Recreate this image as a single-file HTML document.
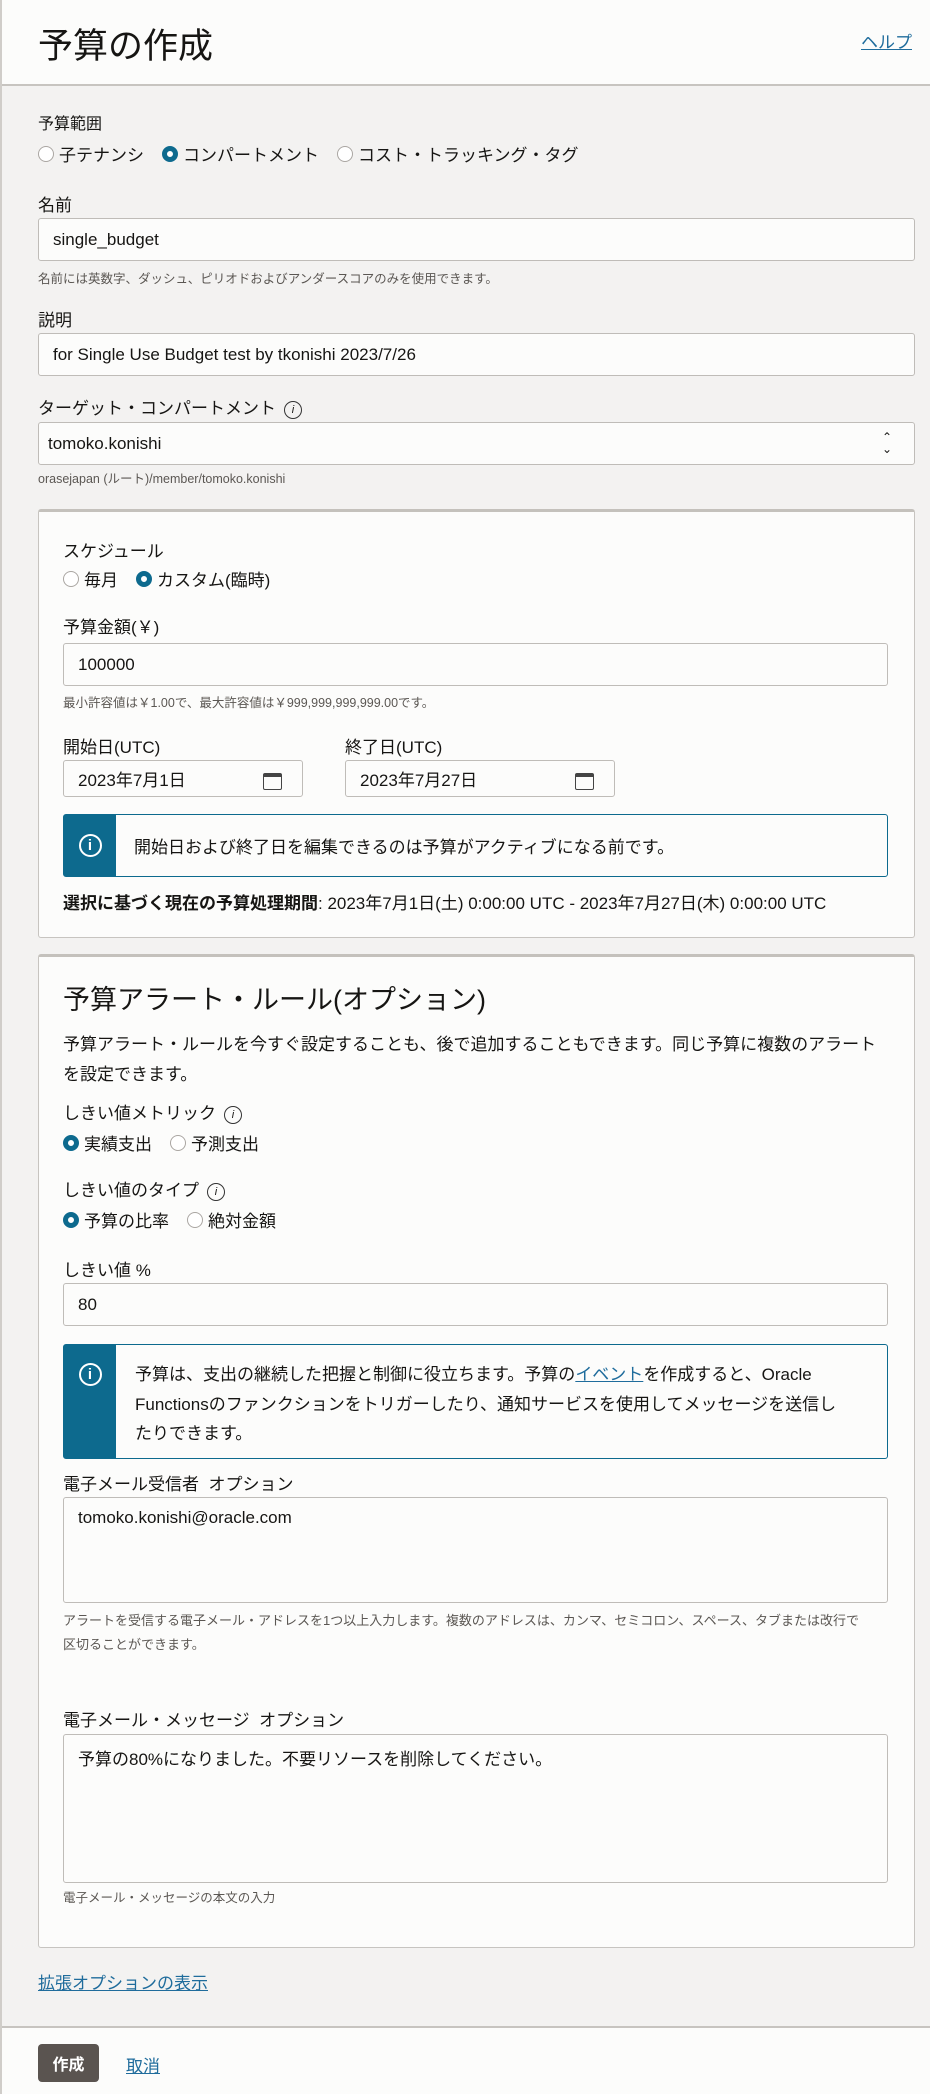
<!DOCTYPE html>
<html><head><meta charset="utf-8">
<style>
*{box-sizing:border-box;margin:0;padding:0}
body{width:930px;height:2094px;background:#f3f2f1;font-family:"Liberation Sans","Noto Sans CJK JP",sans-serif;color:#161513;font-size:17px;position:relative;overflow:hidden;border-left:2px solid #d0cdc9}
.abs{position:absolute}
.hdr{left:0;top:0;width:930px;height:86px;background:#fcfcfb;border-bottom:2px solid #c7c4c0}
.title{left:36px;top:18px;font-size:35px;color:#161513}
.help{right:18px;top:28px;font-size:17px;color:#1f6c9c;text-decoration:underline}
.lbl{font-size:17px;color:#161513}
.inp{background:#fcfcfb;border:1px solid #bfbcb8;border-radius:3px;font-size:17px;padding-left:14px;display:flex;align-items:center}
.hint{font-size:12.5px;color:#5b5753}
.radio{display:inline-flex;align-items:center;margin-right:18px;font-size:17px}
.rb{width:16px;height:16px;border-radius:50%;border:1px solid #aaa6a2;background:#fff;margin-right:5px;display:inline-block}
.rb.on{border:5px solid #0d6a8e;background:#fff}
.box{background:#fcfcfb;border:1px solid #c7c4c0;border-top:3px solid #c4c1bc;border-radius:3px}
.info{border:1px solid #0d6a8e;border-radius:3px;background:#fcfcfb;display:flex}
.info .bar{width:52px;flex-shrink:0;background:#0d6a8e;display:flex;justify-content:center;align-items:center}
.ic{width:23px;height:23px;border:2px solid #fff;border-radius:50%;color:#fff;font-size:15px;display:flex;align-items:center;justify-content:center;font-weight:bold}
.ii{display:inline-flex;width:18px;height:18px;border:1.5px solid #333;border-radius:50%;font-size:11px;font-style:italic;align-items:center;justify-content:center;margin-left:8px;vertical-align:middle}
.cal{position:absolute;right:20px;top:12px;width:19px;height:17px;border:1.5px solid #444;border-top-width:4px;border-radius:2px}
a{color:#1f6c9c}
</style></head><body>
<div class="abs hdr"></div>
<div class="abs title">予算の作成</div>
<div class="abs help">ヘルプ</div>

<div class="abs lbl" style="left:36px;top:110px;font-size:16px">予算範囲</div>
<div class="abs" style="left:36px;top:141px"><span class="radio"><span class="rb"></span>子テナンシ</span><span class="radio"><span class="rb on"></span>コンパートメント</span><span class="radio"><span class="rb"></span>コスト・トラッキング・タグ</span></div>

<div class="abs lbl" style="left:36px;top:191px">名前</div>
<div class="abs inp" style="left:36px;top:218px;width:877px;height:43px">single_budget</div>
<div class="abs hint" style="left:36px;top:268px">名前には英数字、ダッシュ、ピリオドおよびアンダースコアのみを使用できます。</div>

<div class="abs lbl" style="left:36px;top:306px">説明</div>
<div class="abs inp" style="left:36px;top:333px;width:877px;height:43px">for Single Use Budget test by tkonishi 2023/7/26</div>

<div class="abs lbl" style="left:36px;top:394px">ターゲット・コンパートメント<span class="ii">i</span></div>
<div class="abs inp" style="left:36px;top:422px;width:877px;height:43px;padding-left:9px">tomoko.konishi<span style="position:absolute;right:22px;top:8px;font-size:12px;line-height:12px;text-align:center">&#8963;<br>&#8964;</span></div>
<div class="abs hint" style="left:36px;top:468px">orasejapan (ルート)/member/tomoko.konishi</div>

<div class="abs box" style="left:36px;top:509px;width:877px;height:429px"></div>
<div class="abs lbl" style="left:61px;top:537px">スケジュール</div>
<div class="abs" style="left:61px;top:566px"><span class="radio"><span class="rb"></span>毎月</span><span class="radio"><span class="rb on"></span>カスタム(臨時)</span></div>
<div class="abs lbl" style="left:61px;top:613px">予算金額(￥)</div>
<div class="abs inp" style="left:61px;top:643px;width:825px;height:43px">100000</div>
<div class="abs hint" style="left:61px;top:692px">最小許容値は￥1.00で、最大許容値は￥999,999,999,999.00です。</div>
<div class="abs lbl" style="left:61px;top:733px">開始日(UTC)</div>
<div class="abs lbl" style="left:343px;top:733px">終了日(UTC)</div>
<div class="abs inp" style="left:61px;top:760px;width:240px;height:37px">2023年7月1日<span class="cal"></span></div>
<div class="abs inp" style="left:343px;top:760px;width:270px;height:37px">2023年7月27日<span class="cal"></span></div>
<div class="abs info" style="left:61px;top:814px;width:825px;height:63px"><div class="bar"><div class="ic">i</div></div><div style="padding:0 0 0 18px;align-self:center;font-size:17px">開始日および終了日を編集できるのは予算がアクティブになる前です。</div></div>
<div class="abs" style="left:61px;top:889px;font-size:17px"><b>選択に基づく現在の予算処理期間</b>: 2023年7月1日(土) 0:00:00 UTC - 2023年7月27日(木) 0:00:00 UTC</div>

<div class="abs box" style="left:36px;top:954px;width:877px;height:994px"></div>
<div class="abs" style="left:61px;top:978px;font-size:27px">予算アラート・ルール(オプション)</div>
<div class="abs" style="left:61px;top:1030px;width:820px;font-size:17px;line-height:30px">予算アラート・ルールを今すぐ設定することも、後で追加することもできます。同じ予算に複数のアラートを設定できます。</div>
<div class="abs lbl" style="left:61px;top:1099px">しきい値メトリック<span class="ii">i</span></div>
<div class="abs" style="left:61px;top:1130px"><span class="radio"><span class="rb on"></span>実績支出</span><span class="radio"><span class="rb"></span>予測支出</span></div>
<div class="abs lbl" style="left:61px;top:1176px">しきい値のタイプ<span class="ii">i</span></div>
<div class="abs" style="left:61px;top:1207px"><span class="radio"><span class="rb on"></span>予算の比率</span><span class="radio"><span class="rb"></span>絶対金額</span></div>
<div class="abs lbl" style="left:61px;top:1256px">しきい値 %</div>
<div class="abs inp" style="left:61px;top:1283px;width:825px;height:43px">80</div>
<div class="abs info" style="left:61px;top:1344px;width:825px;height:115px"><div class="bar" style="align-items:flex-start;padding-top:18px"><div class="ic">i</div></div><div style="padding:15px 34px 0 19px;font-size:17px;line-height:29.5px">予算は、支出の継続した把握と制御に役立ちます。予算の<a href="#" style="text-decoration:underline">イベント</a>を作成すると、Oracle Functionsのファンクションをトリガーしたり、通知サービスを使用してメッセージを送信したりできます。</div></div>
<div class="abs lbl" style="left:61px;top:1470px">電子メール受信者 &nbsp;オプション</div>
<div class="abs inp" style="left:61px;top:1497px;width:825px;height:106px;align-items:flex-start;padding-top:10px">tomoko.konishi@oracle.com</div>
<div class="abs hint" style="left:61px;top:1609px;width:808px;line-height:24px;font-size:13px">アラートを受信する電子メール・アドレスを1つ以上入力します。複数のアドレスは、カンマ、セミコロン、スペース、タブまたは改行で区切ることができます。</div>
<div class="abs lbl" style="left:61px;top:1706px">電子メール・メッセージ &nbsp;オプション</div>
<div class="abs inp" style="left:61px;top:1734px;width:825px;height:149px;align-items:flex-start;padding-top:10px">予算の80%になりました。不要リソースを削除してください。</div>
<div class="abs hint" style="left:61px;top:1887px">電子メール・メッセージの本文の入力</div>

<div class="abs" style="left:36px;top:1969px;font-size:17px;color:#1f6c9c;text-decoration:underline">拡張オプションの表示</div>

<div class="abs" style="left:0;top:2026px;width:930px;height:68px;background:#fcfcfb;border-top:2px solid #c7c4c0"></div>
<div class="abs" style="left:36px;top:2044px;width:61px;height:38px;background:#5a5450;color:#fff;border-radius:4px;font-size:16px;display:flex;align-items:center;justify-content:center;font-weight:bold">作成</div>
<div class="abs" style="left:124px;top:2052px;font-size:17px;color:#1f6c9c;text-decoration:underline">取消</div>
</body></html>
